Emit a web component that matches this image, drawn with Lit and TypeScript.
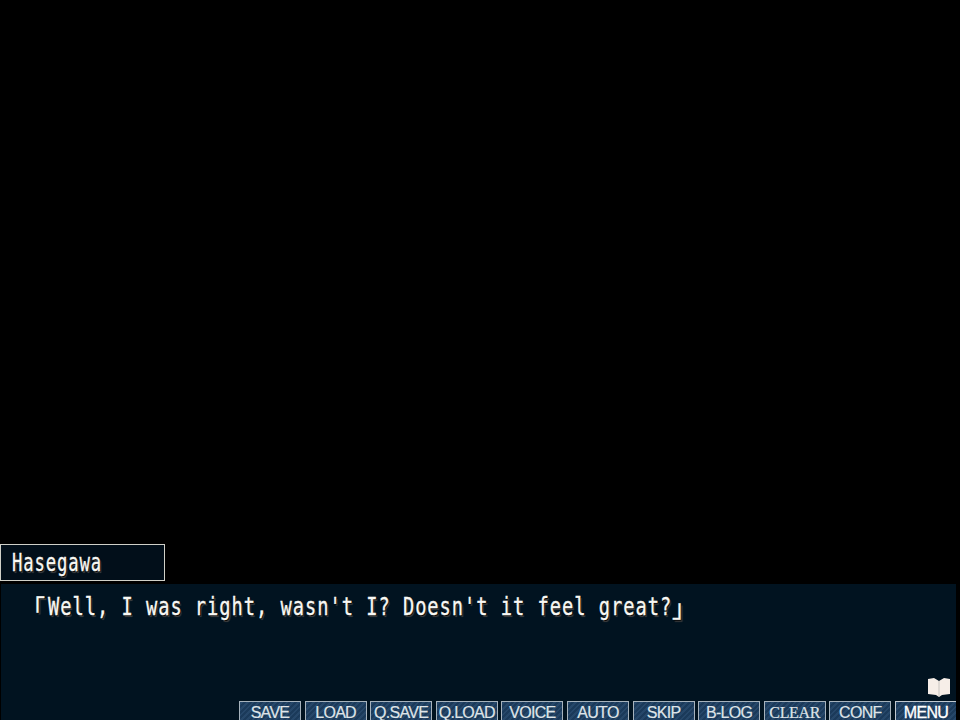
import { LitElement, html, css } from "lit";
import { customElement } from "lit/decorators.js";

const BUTTONS = ["SAVE", "LOAD", "Q.SAVE", "Q.LOAD", "VOICE", "AUTO", "SKIP", "B-LOG", "CLEAR", "CONF", "MENU"];

@customElement("app-root")
export class AppRoot extends LitElement {
  static styles = css`
    :host {
      display: flex;
      flex-direction: column;
      justify-content: flex-end;
      width: 960px;
      height: 720px;
      background: #000;
      overflow: hidden;
      font-family: "DejaVu Sans Mono", monospace;
    }
    .name {
      box-sizing: border-box;
      width: 165px;
      height: 37px;
      margin-bottom: 3px;
      background: #020f1a;
      border: 1px solid #d0d0c8;
      display: flex;
      align-items: center;
      padding-left: 11px;
      overflow: hidden;
    }
    .name span {
      display: block;
      font-size: 24px;
      line-height: 30px;
      letter-spacing: 1.2px;
      color: #f8f8f4;
      -webkit-text-stroke: 0.35px #f8f8f4;
      text-shadow: 1px 1px 1px #000, 2px 2px 1px #444;
      transform: scaleX(0.72);
      transform-origin: left center;
      white-space: pre;
    }
    .panel {
      position: relative;
      box-sizing: border-box;
      width: 955px;
      height: 136px;
      margin-left: 1px;
      background: #011320;
      overflow: hidden;
      display: flex;
      flex-direction: column;
      justify-content: space-between;
    }
    .line {
      display: flex;
      align-items: center;
      height: 28px;
      margin-top: 9px;
      padding-left: 20px;
      color: #f8f8f4;
      white-space: pre;
      -webkit-text-stroke: 0.35px #f8f8f4;
      text-shadow: 1px 1px 1px #000, 2px 2px 1px #444;
    }
    .bracket {
      font-family: "Noto Sans CJK JP", sans-serif;
      font-size: 24px;
      line-height: 28px;
      width: 27px;
      flex: none;
    }
    .say {
      font-size: 24px;
      line-height: 28px;
      width: 624px;
      flex: none;
    }
    .say span {
      display: inline-block;
      letter-spacing: 1.24px;
      transform: scaleX(0.78);
      transform-origin: left center;
    }
    .book {
      position: absolute;
      right: 5px;
      top: 93px;
      width: 24px;
      height: 21px;
    }
    .buttons {
      display: flex;
      gap: 3.6px;
      margin: auto -1px 0 238px;
      height: 19px;
    }
    .btn {
      box-sizing: border-box;
      flex: none;
      width: 62px;
      height: 24px;
      border: 1px solid #a6b2bc;
      background-color: #1f3f60;
      background-image: repeating-linear-gradient(135deg, #1b3a5a 0 2px, #264769 2px 4px);
      background-origin: border-box;
      color: #dfe4e8;
      -webkit-text-stroke: 0.2px #dfe4e8;
      font-family: "Liberation Sans", sans-serif;
      font-size: 16px;
      line-height: 21px;
      letter-spacing: -0.7px;
      text-align: center;
      white-space: nowrap;
      overflow: hidden;
    }
    .btn.clear {
      font-family: "Liberation Serif", serif;
      letter-spacing: -0.3px;
    }
    .btn.menu {
      color: #fff;
      -webkit-text-stroke: 0.3px #fff;
      border-color: #c0c8d0;
    }
  `;

  render() {
    return html`
      <div class="name"><span>Hasegawa</span></div>
      <div class="panel">
        <div class="line">
          <span class="bracket" lang="ja">「</span>
          <div class="say"><span>Well, I was right, wasn't I? Doesn't it feel great?</span></div>
          <span class="bracket" lang="ja">」</span>
        </div>
        <svg class="book" viewBox="0 0 24 21">
          <path d="M1 2 L7 1 L12 4 L17 1 L23 2 L23 17 L15 18 L12 20 L9 18 L1 17 Z" fill="#f6eee8" />
          <path d="M12 4 V19" stroke="#c8c4c0" stroke-width="1" fill="none" />
        </svg>
        <div class="buttons">
          ${BUTTONS.map(
            (b) => html`<div class="btn ${b === "CLEAR" ? "clear" : ""} ${b === "MENU" ? "menu" : ""}">${b}</div>`
          )}
        </div>
      </div>
    `;
  }
}
